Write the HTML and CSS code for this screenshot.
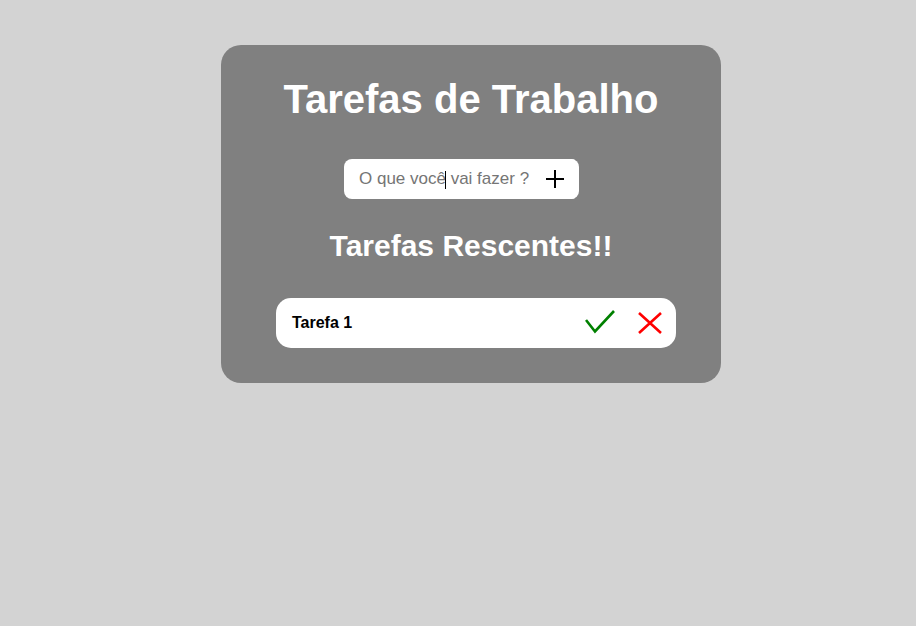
FILE: index.html
```html
<!DOCTYPE html>
<html lang="pt-BR">
<head>
<meta charset="utf-8">
<title>Tarefas de Trabalho</title>
<link rel="stylesheet" href="styles.css">
</head>
<body>
<main class="card">
  <h1 class="title">Tarefas de Trabalho</h1>
  <form class="add-form">
    <div class="field">
      <input class="task-input" type="text" placeholder="O que você vai fazer ?">
      <span class="caret"></span>
    </div>
    <button class="add-btn" type="button" aria-label="Adicionar">
      <svg width="20" height="20" viewBox="0 0 20 20"><path d="M10 1v18M1 10h18" stroke="#000" stroke-width="2" fill="none"/></svg>
    </button>
  </form>
  <h2 class="subtitle">Tarefas Rescentes!!</h2>
  <ul class="tasks">
    <li class="task">
      <span class="task-name">Tarefa 1</span>
      <div class="actions">
        <svg class="check" width="30" height="30" viewBox="0 0 30 30"><polyline points="1,13 10,24.5 29,4" stroke="#008000" stroke-width="2.6" fill="none"/></svg>
        <svg class="close" width="26" height="26" viewBox="0 0 26 26"><path d="M2 3L24 23M24 3L2 23" stroke="#ff0000" stroke-width="2.6" fill="none"/></svg>
      </div>
    </li>
  </ul>
</main>
</body>
</html>
```

FILE: styles.css
```css
html, body {
  margin: 0;
  padding: 0;
}
body {
  background: #d3d3d3;
  font-family: "Liberation Sans", Arial, sans-serif;
  min-height: 626px;
}
.card {
  width: 500px;
  height: 338px;
  box-sizing: border-box;
  margin: 45px 0 0 221px;
  background: #808080;
  border-radius: 20px;
  padding: 31px 0 35px;
  display: flex;
  flex-direction: column;
  align-items: center;
}
.title {
  margin: 0;
  font-size: 40px;
  font-weight: bold;
  color: #fff;
  line-height: 46px;
}
.add-form {
  margin-top: 37px;
  align-self: flex-start;
  margin-left: 123px;
  display: flex;
  width: 235px;
  height: 40px;
  background: #fff;
  border-radius: 8px;
  overflow: hidden;
}
.field {
  position: relative;
  flex: 1;
  display: flex;
}
.task-input {
  border: none;
  outline: none;
  background: transparent;
  width: 100%;
  padding: 0 0 0 15px;
  font-family: "Liberation Sans", Arial, sans-serif;
  font-size: 17px;
  color: #000;
}
.task-input::placeholder {
  color: #757575;
}
.caret {
  position: absolute;
  left: 101px;
  top: 12px;
  width: 1px;
  height: 18px;
  background: #000;
}
.add-btn {
  width: 40px;
  border: none;
  background: #fff;
  padding: 0;
  display: flex;
  align-items: center;
  justify-content: center;
  margin-right: 4px;
}
.subtitle {
  margin: 30px 0 0;
  font-size: 30px;
  font-weight: bold;
  color: #fff;
  line-height: 34px;
}
.tasks {
  list-style: none;
  margin: 35px 0 0 55px;
  align-self: flex-start;
  padding: 0;
}
.task {
  width: 400px;
  height: 50px;
  box-sizing: border-box;
  background: #fff;
  border-radius: 15px;
  display: flex;
  align-items: center;
  justify-content: space-between;
  padding: 0 13px 0 16px;
}
.task-name {
  font-size: 16px;
  font-weight: bold;
  color: #000;
}
.actions {
  display: flex;
  align-items: center;
  gap: 22px;
}
.check {
  margin-top: -2px;
}
```
